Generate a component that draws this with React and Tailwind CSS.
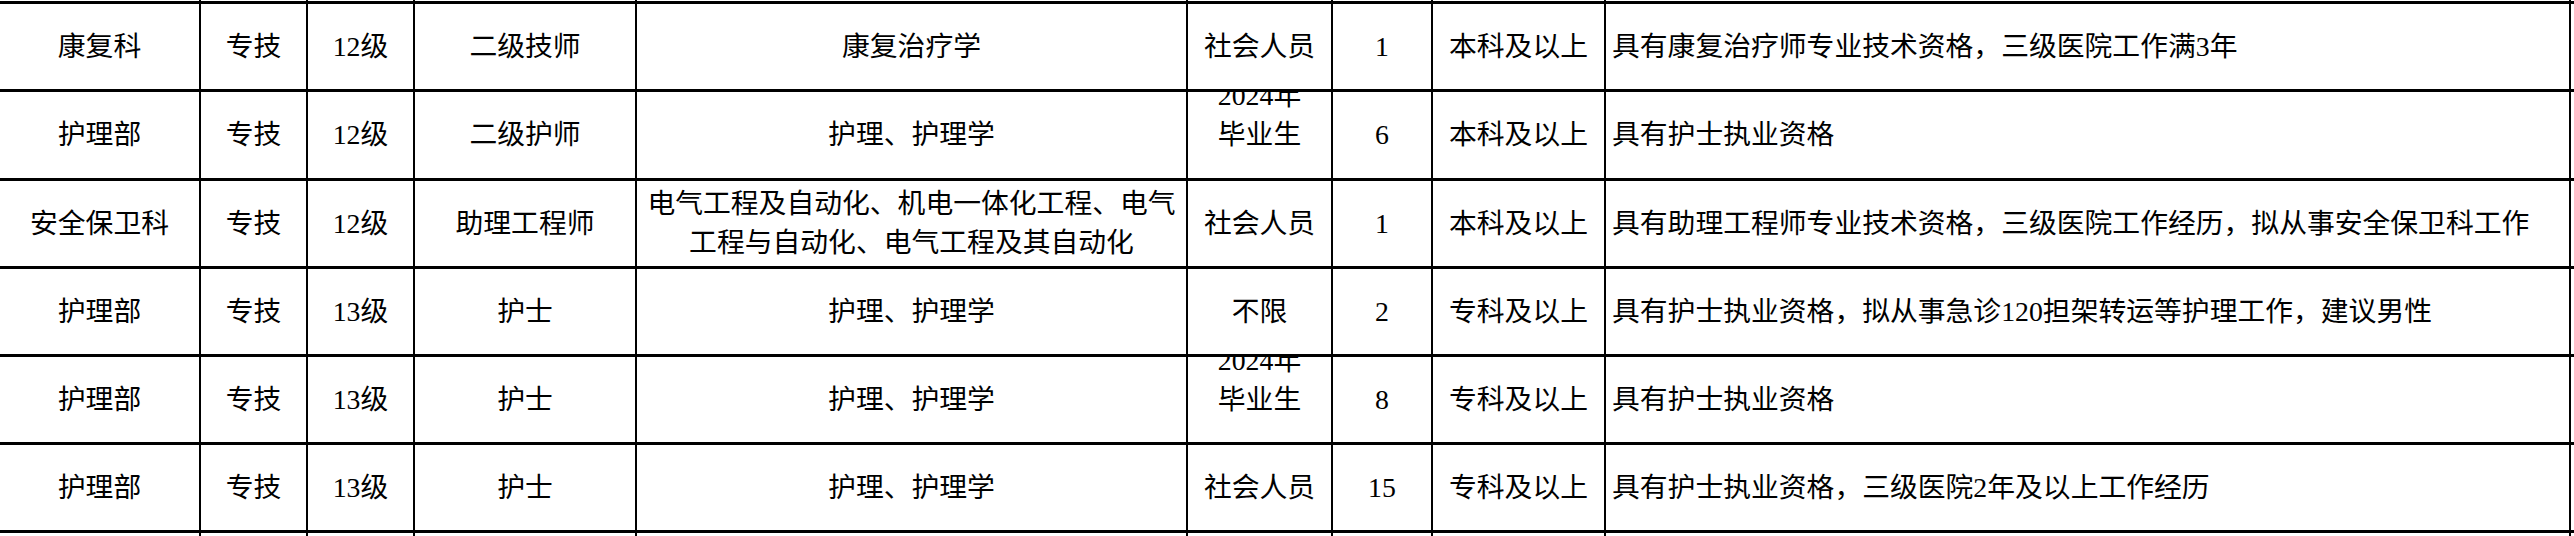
import React from "react";

const GRID =
  "grid grid-cols-[201px_107px_107px_222px_551px_145px_100px_173px_965px]";

const rows = [
  ["康复科", "专技", "12级", "二级技师", ["康复治疗学"], "社会人员", "1", "本科及以上", "具有康复治疗师专业技术资格，三级医院工作满3年"],
  ["护理部", "专技", "12级", "二级护师", ["护理、护理学"], "GRAD", "6", "本科及以上", "具有护士执业资格"],
  ["安全保卫科", "专技", "12级", "助理工程师", ["电气工程及自动化、机电一体化工程、电气", "工程与自动化、电气工程及其自动化"], "社会人员", "1", "本科及以上", "具有助理工程师专业技术资格，三级医院工作经历，拟从事安全保卫科工作"],
  ["护理部", "专技", "13级", "护士", ["护理、护理学"], "不限", "2", "专科及以上", "具有护士执业资格，拟从事急诊120担架转运等护理工作，建议男性"],
  ["护理部", "专技", "13级", "护士", ["护理、护理学"], "GRAD", "8", "专科及以上", "具有护士执业资格"],
  ["护理部", "专技", "13级", "护士", ["护理、护理学"], "社会人员", "15", "专科及以上", "具有护士执业资格，三级医院2年及以上工作经历"],
];

function Cell({ children, left, last }) {
  return (
    <div
      className={
        "flex items-center overflow-hidden border-r-2 border-black whitespace-nowrap " +
        (left ? "justify-start pl-[6px]" : "justify-center text-center")
      }
    >
      {children}
    </div>
  );
}

function EmptyRow({ className }) {
  return (
    <div className={GRID + " " + className}>
      {Array.from({ length: 9 }).map((_, i) => (
        <div key={i} className="border-r-2 border-black" />
      ))}
    </div>
  );
}

export default function App() {
  return (
    <div className="w-[2574px] h-[536px] overflow-hidden bg-white text-black font-['Liberation_Serif','Noto_Sans_CJK_SC',serif] text-[27.8px] leading-[39px]">
      <EmptyRow className="h-[1.2px]" />
      {rows.map((r, ri) => (
        <div key={ri} className={GRID + " h-[88.2px] border-t-[3px] border-black"}>
          <Cell>{r[0]}</Cell>
          <Cell>{r[1]}</Cell>
          <Cell>{r[2]}</Cell>
          <Cell>{r[3]}</Cell>
          <Cell>
            <div className="flex flex-col items-center">
              {r[4].map((l, i) => (
                <div key={i}>{l}</div>
              ))}
            </div>
          </Cell>
          <Cell>
            {r[5] === "GRAD" ? (
              <div className="flex flex-col items-center">
                <div>2024年</div>
                <div>毕业生</div>
                <div>&nbsp;</div>
              </div>
            ) : (
              r[5]
            )}
          </Cell>
          <Cell>{r[6]}</Cell>
          <Cell>{r[7]}</Cell>
          <Cell left>{r[8]}</Cell>
        </div>
      ))}
      <EmptyRow className="h-[10px] border-t-[3px] border-black" />
    </div>
  );
}
